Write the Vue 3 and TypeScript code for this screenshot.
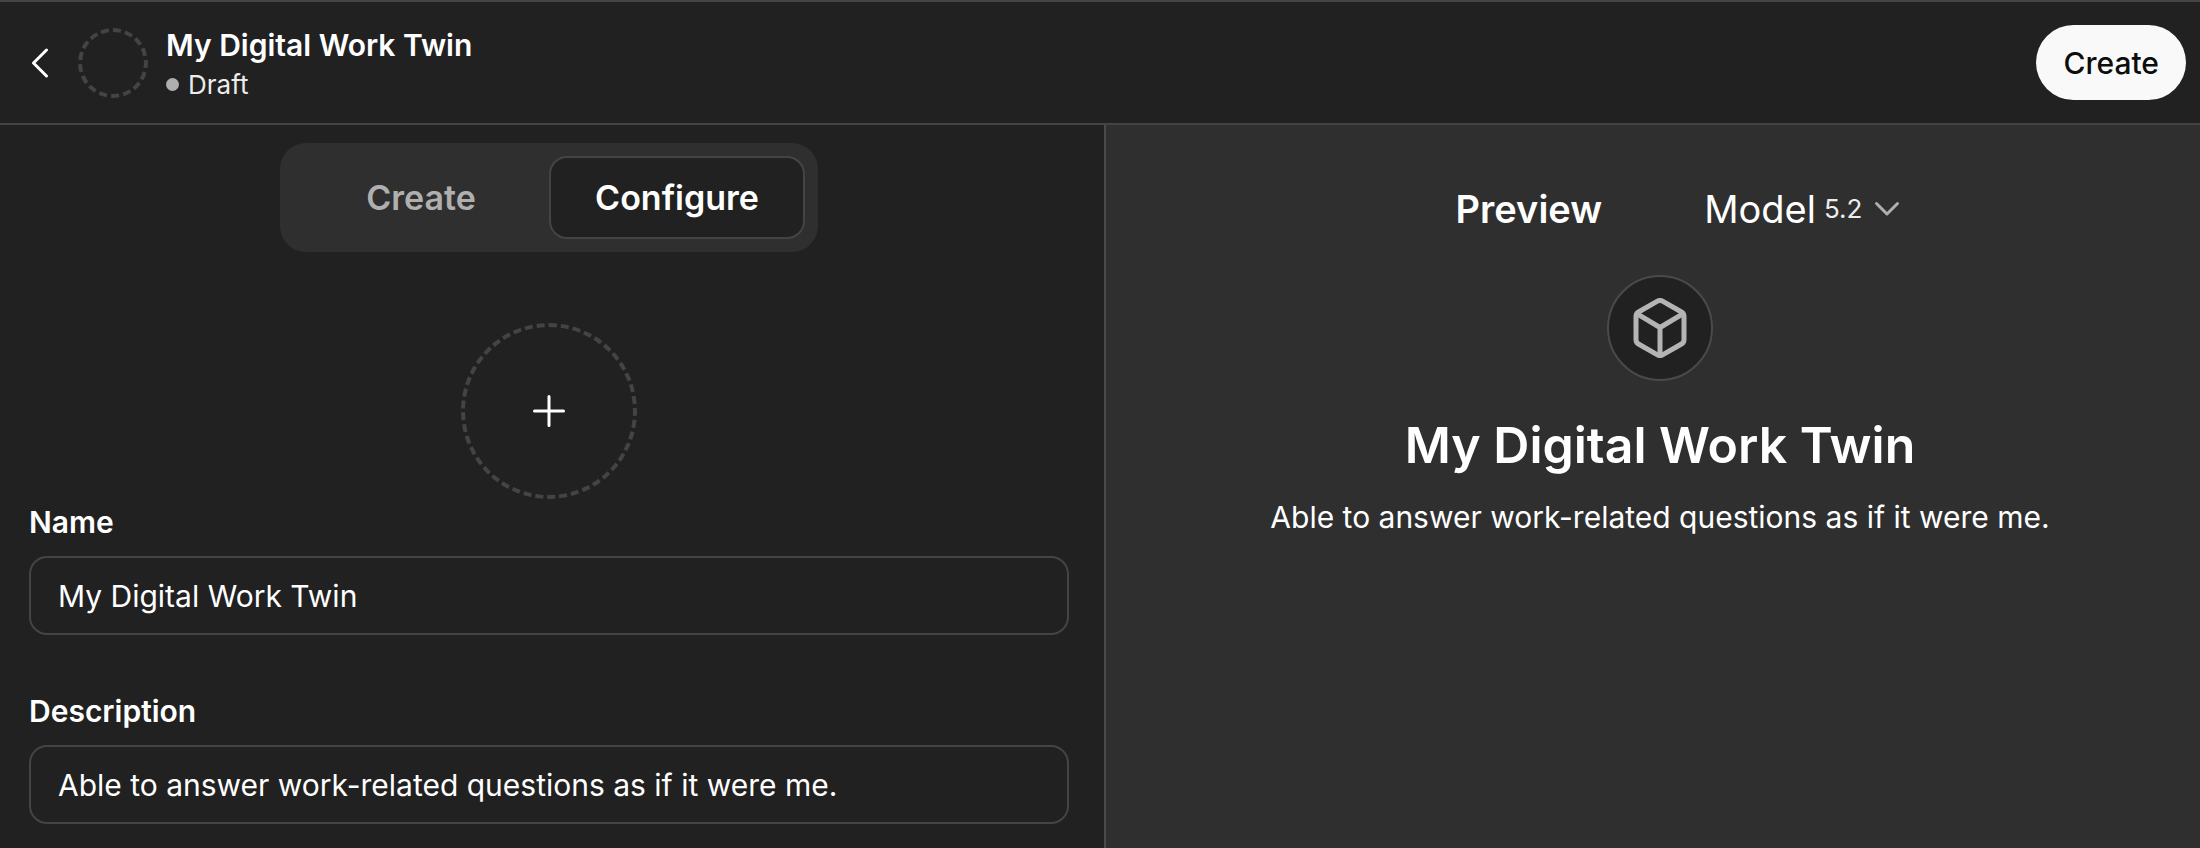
<script setup lang="ts">
import { ref } from 'vue'

type Tab = 'Create' | 'Configure'

const tabs: Tab[] = ['Create', 'Configure']
const activeTab = ref<Tab>('Configure')
const name = ref('My Digital Work Twin')
const description = ref('Able to answer work-related questions as if it were me.')
const modelVersion = ref('5.2')
</script>

<template>
  <div class="app">
    <header class="topbar">
      <button class="back" type="button" aria-label="Back">
        <svg width="18" height="30" viewBox="0 0 18 30" fill="none" stroke="currentColor" stroke-width="3" stroke-linecap="round" stroke-linejoin="round">
          <path d="M15.500 2 2.500 15l13 13" />
        </svg>
      </button>
      <div class="avatar"></div>
      <div class="identity">
        <h1 class="title">{{ name }}</h1>
        <p class="status"><span class="dot"></span>Draft</p>
      </div>
      <button class="publish" type="button">Create</button>
    </header>

    <main class="columns">
      <section class="editor">
        <div class="tabs" role="tablist">
          <button
            v-for="tab in tabs"
            :key="tab"
            class="tab"
            :class="{ active: tab === activeTab }"
            type="button"
            role="tab"
            :aria-selected="tab === activeTab"
            @click="activeTab = tab"
          >
            {{ tab }}
          </button>
        </div>

        <button class="upload" type="button" aria-label="Add image">
          <svg width="34" height="34" viewBox="0 0 34 34" fill="none" stroke="currentColor" stroke-width="3" stroke-linecap="round">
            <path d="M17 2.500v29M2.500 17h29" />
          </svg>
        </button>

        <div class="field">
          <label class="label" for="name">Name</label>
          <input id="name" v-model="name" class="input" type="text" />
        </div>
        <div class="field">
          <label class="label" for="description">Description</label>
          <input id="description" v-model="description" class="input" type="text" />
        </div>
      </section>

      <section class="preview">
        <div class="preview-bar">
          <h2 class="preview-label">Preview</h2>
          <button class="model" type="button" aria-haspopup="listbox">
            <span>Model</span>
            <span class="version">{{ modelVersion }}</span>
            <svg class="chevron" width="26" height="16" viewBox="0 0 26 16" fill="none" stroke="currentColor" stroke-width="3" stroke-linecap="round" stroke-linejoin="round">
              <path d="M2.500 2.500 13 13 23.500 2.500" />
            </svg>
          </button>
        </div>
        <div class="emblem">
          <svg width="54" height="60" viewBox="0 0 54 60" fill="none" stroke="currentColor" stroke-width="5" stroke-linecap="round" stroke-linejoin="round">
            <path d="M24.500 3.200a5 5 0 0 1 5 0l19 10.800a5 5 0 0 1 2.500 4.300v23.400a5 5 0 0 1-2.500 4.300l-19 10.800a5 5 0 0 1-5 0L5.500 46A5 5 0 0 1 3 41.700V18.300A5 5 0 0 1 5.500 14z" />
            <path d="M4.200 15.800 27 29.500l22.800-13.700M27 29.500V57" />
          </svg>
        </div>
        <h2 class="preview-title">{{ name }}</h2>
        <p class="preview-text">{{ description }}</p>
      </section>
    </main>
  </div>
</template>

<style>
body {
  margin: 0;
  background: #212121;
}
</style>

<style scoped>
.app {
  display: flex;
  flex-direction: column;
  min-height: 100vh;
  box-sizing: border-box;
  border-top: 2px solid #444;
  background: #212121;
  color: #fff;
  font-family: Inter, "Liberation Sans", sans-serif;
  font-size: 30px;
  line-height: 40px;
}

.app * {
  box-sizing: border-box;
}

button,
input {
  margin: 0;
  padding: 0;
  border: 0;
  background: none;
  color: inherit;
  font: inherit;
}

button {
  cursor: pointer;
}

h1,
h2,
p {
  margin: 0;
}

svg {
  display: block;
}

.topbar {
  display: flex;
  align-items: center;
  height: 123px;
  padding: 0 14px 0 31px;
  border-bottom: 2px solid #444;
}

.avatar {
  width: 70px;
  height: 70px;
  margin: 0 18px 0 29px;
  border: 4px dashed #444;
  border-radius: 50%;
}

.identity {
  padding-top: 4px;
}

.title {
  font-size: 30px;
  font-weight: 600;
  line-height: 40px;
}

.status {
  display: flex;
  align-items: center;
  gap: 9px;
  color: #ececec;
  font-size: 26px;
}

.dot {
  width: 13px;
  height: 13px;
  border-radius: 50%;
  background: #afafaf;
}

.publish {
  height: 75px;
  margin-left: auto;
  padding: 0 27px;
  border-radius: 38px;
  background: #f9f9f9;
  color: #0d0d0d;
  font-weight: 500;
}

.columns {
  display: grid;
  grid-template-columns: 1106fr 1094fr;
  flex: 1;
}

.editor {
  display: flex;
  flex-direction: column;
  padding: 18px 35px 24px 29px;
  border-right: 2px solid #4a4a4a;
}

.tabs {
  display: grid;
  grid-template-columns: 256px 256px;
  align-self: center;
  padding: 13px;
  border-radius: 26px;
  background: #2f2f2f;
}

.tab {
  height: 83px;
  border: 2px solid transparent;
  border-radius: 18px;
  color: #afafaf;
  font-size: 34px;
  font-weight: 600;
}

.tab.active {
  border-color: #444;
  background: #212121;
  color: #fff;
}

.upload {
  display: grid;
  place-items: center;
  align-self: center;
  width: 176px;
  height: 176px;
  margin-top: 71px;
  border: 4px dashed #444;
  border-radius: 50%;
}

.field {
  display: flex;
  flex-direction: column;
  gap: 14px;
}

.field + .field {
  margin-top: 56px;
}

.upload + .field {
  margin-top: 3px;
}

.label {
  font-weight: 600;
}

.input {
  width: 100%;
  height: 79px;
  padding: 0 27px;
  border: 2px solid #444;
  border-radius: 18px;
  outline: none;
}

.preview {
  display: flex;
  flex-direction: column;
  align-items: center;
  padding: 60px 0 24px 14px;
  background: #2f2f2f;
}

.preview-bar {
  display: flex;
  align-items: center;
  gap: 102px;
  height: 48px;
  margin-left: 36px;
}

.preview-label {
  font-size: 38px;
  font-weight: 600;
  line-height: 48px;
}

.model {
  display: flex;
  align-items: center;
  gap: 8px;
  font-size: 38px;
}

.version {
  color: #ececec;
  font-size: 26px;
}

.chevron {
  margin-left: 4px;
  color: #afafaf;
}

.emblem {
  display: grid;
  place-items: center;
  width: 106px;
  height: 106px;
  margin-top: 42px;
  border: 2px solid #4a4a4a;
  border-radius: 50%;
  background: #212121;
  color: #b4b4b4;
}

.preview-title {
  margin-top: 32px;
  font-size: 50px;
  font-weight: 600;
  line-height: 64px;
}

.preview-text {
  margin-top: 20px;
}
</style>
